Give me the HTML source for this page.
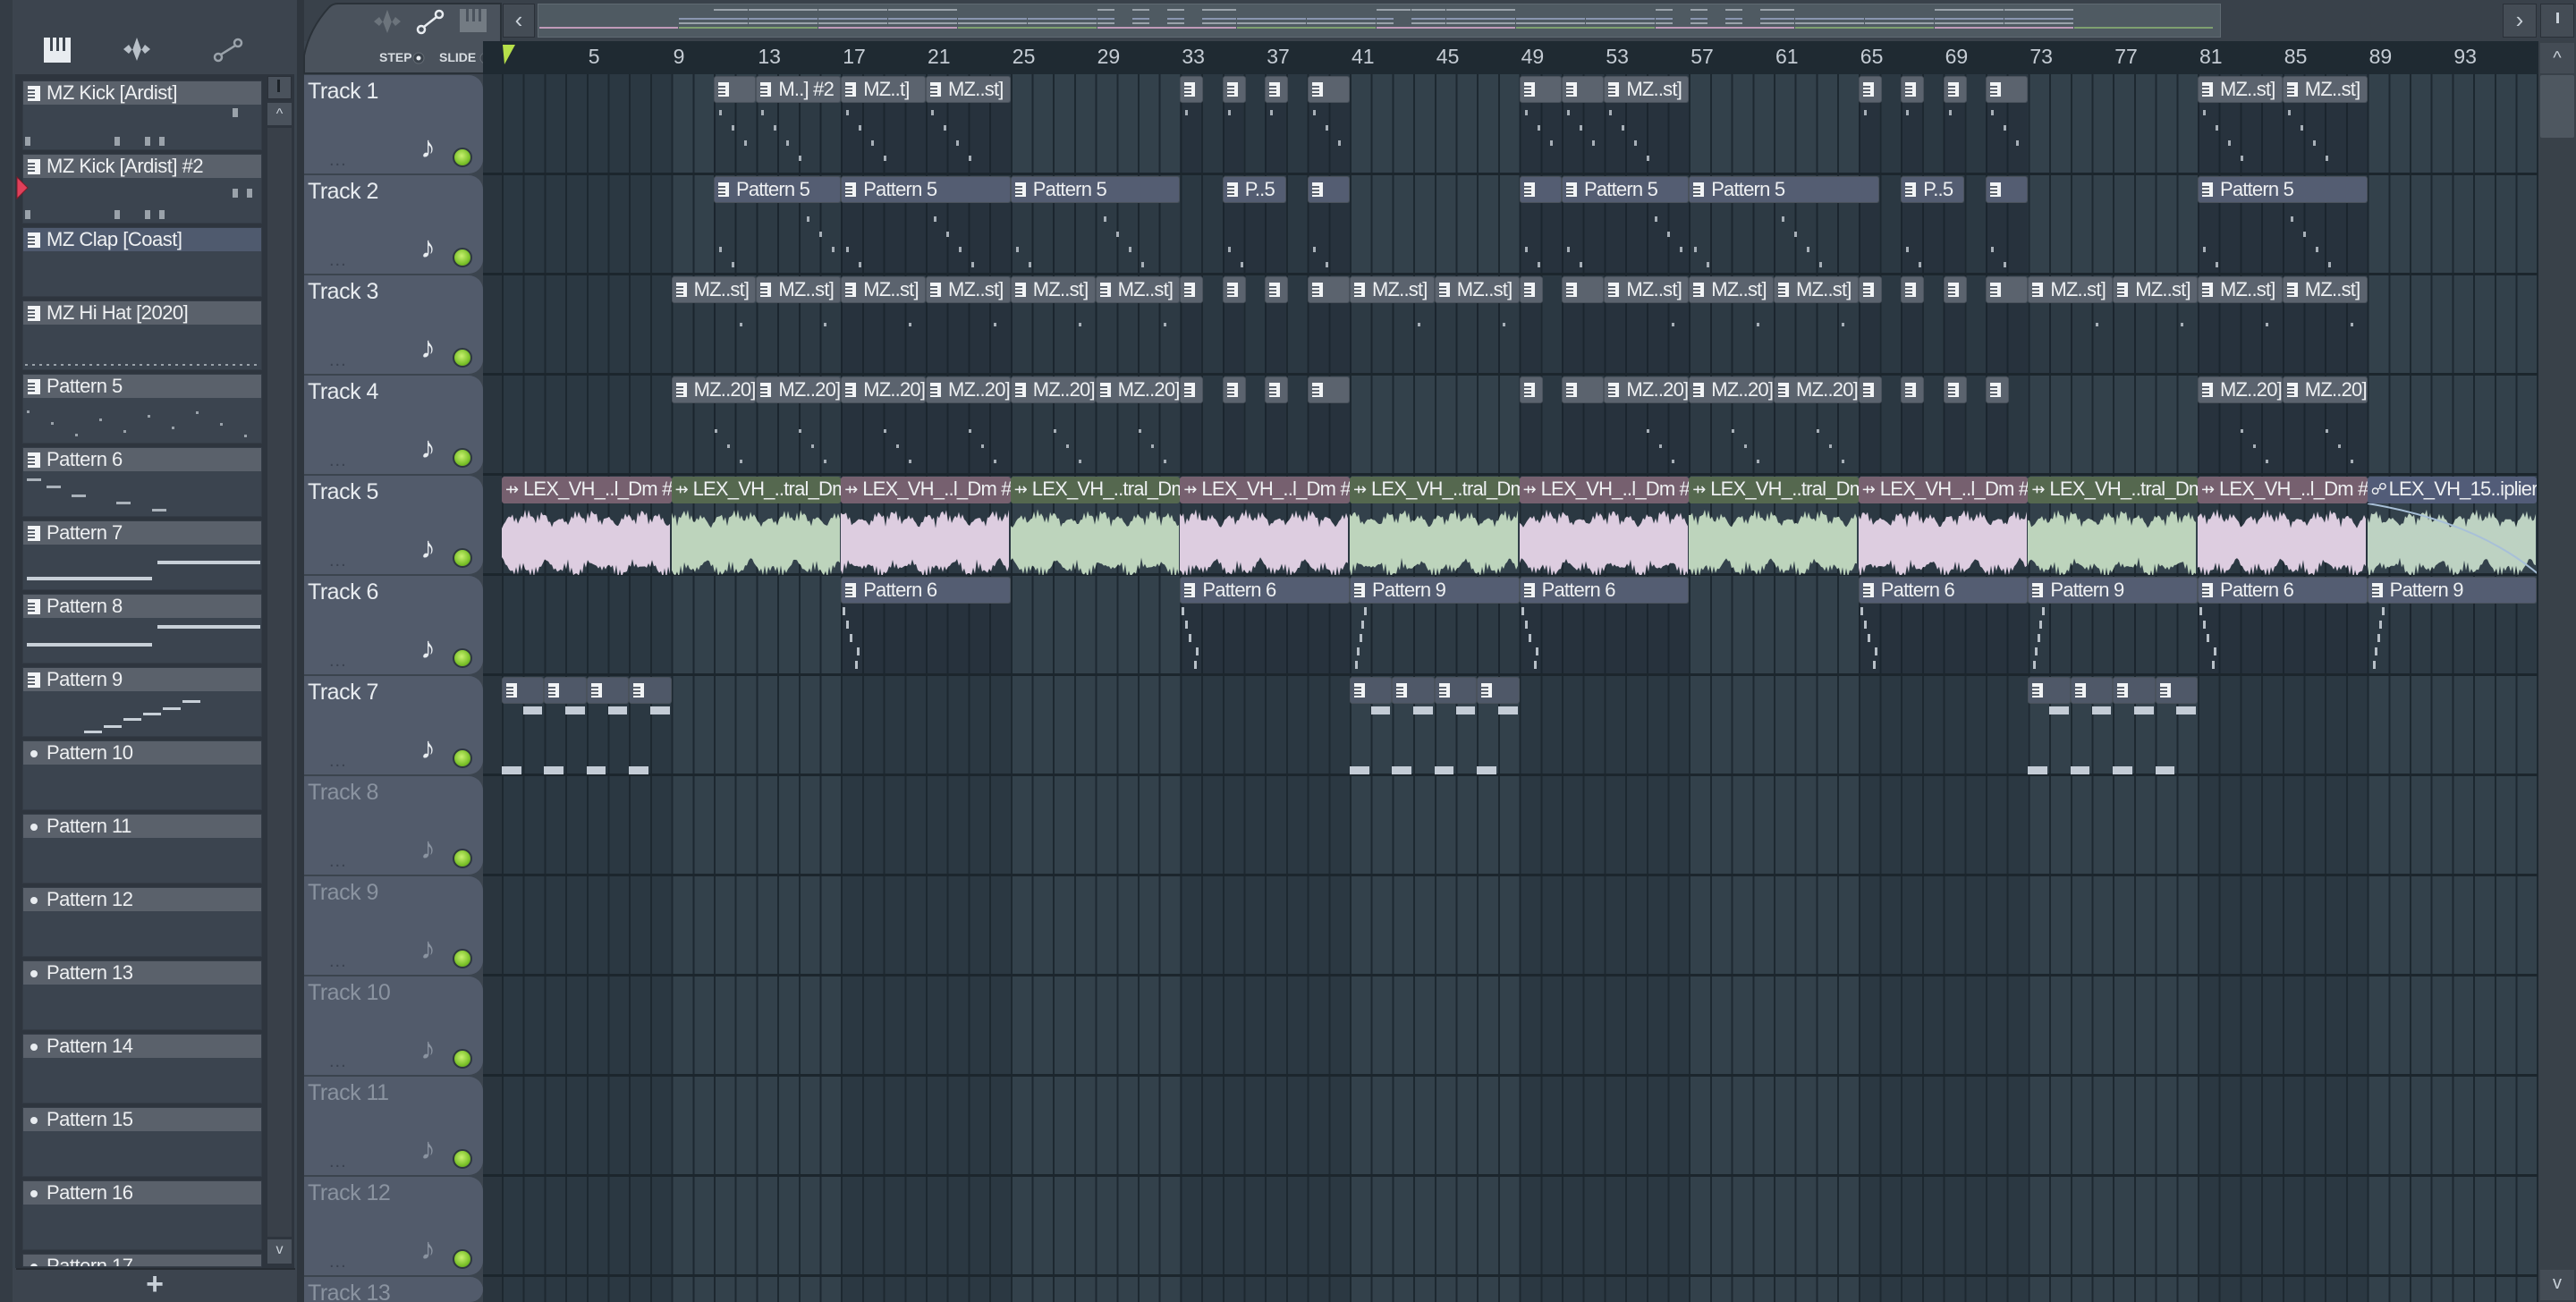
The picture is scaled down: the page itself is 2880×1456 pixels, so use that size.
<!DOCTYPE html>
<html><head><meta charset="utf-8"><style>
*{margin:0;padding:0;box-sizing:border-box}
html,body{width:2880px;height:1456px;overflow:hidden}
body{background:#3b444e;font-family:"Liberation Sans Narrow","Liberation Sans",sans-serif;color:#e6eaee}
#root{position:relative;width:2880px;height:1456px;overflow:hidden}
.a{position:absolute}
.pi{position:absolute;left:25px;width:268px;height:78px;background:#3b444f;border:1px solid #343c46}
.pt{position:absolute;left:0;top:0;width:100%;height:26px;background:#5a616b;font-size:22px;line-height:26px;padding-left:26px;white-space:nowrap;color:#eef0f2;letter-spacing:-0.5px}
.ic{position:absolute;left:5px;top:5px;width:14px;height:17px;background:#f2f4f6}
.ic:before{content:"";position:absolute;left:0;top:4px;width:8px;height:2px;background:#5a616b;box-shadow:0 4px 0 #5a616b,0 8px 0 #5a616b}
.dot{position:absolute;left:8px;top:10px;width:8px;height:8px;border-radius:50%;background:#e8ecf0}
.th{position:absolute;left:340px;width:200px;height:110px;background:#525b6b;border-radius:0 16px 16px 0;font-size:25px;padding:4px 0 0 4px;letter-spacing:-0.5px;overflow:hidden}
.th .n{position:absolute;left:130px;top:62px;font-size:34px}
.th .g{position:absolute;left:166px;top:81px;width:22px;height:22px;border-radius:50%;background:radial-gradient(circle at 45% 40%,#c8f070,#7cc22a 60%,#4d8a18);border:2px solid #2e3840}
.th .d{position:absolute;left:28px;top:84px;font-size:20px;color:#3a4250;letter-spacing:1px}
.cl{position:absolute;height:30px;background:#5b636e;border-radius:3px;border:1px solid #4a525c;font-size:22px;line-height:28px;padding-left:24px;white-space:nowrap;overflow:hidden;color:#eef0f2;letter-spacing:-0.8px}
.cl .ic{left:4px;top:6px;width:12px;height:16px}
.cl .ic:before{background:#5b636e}
.cb{position:absolute;background:rgba(20,30,40,.18)}
.au{position:absolute;height:30px;font-size:22px;line-height:28px;padding-left:24px;white-space:nowrap;overflow:hidden;color:#eef0f2;border-radius:3px;letter-spacing:-0.8px}
.rn{position:absolute;top:50px;font-size:23px;color:#c5ccd4}
</style></head><body><div id="root">
<div class="a" style="left:0;top:0;width:14px;height:1456px;background:#343c45"></div>
<div class="a" style="left:14px;top:0;width:318px;height:83px;background:#3c444e"></div>
<svg class="a" style="left:40px;top:30px" width="270" height="45">
<rect x="9" y="12" width="30" height="28" fill="#e8ecf0"/><rect x="16" y="12" width="3" height="15" fill="#3c444e"/><rect x="23" y="12" width="3" height="15" fill="#3c444e"/><rect x="30" y="12" width="3" height="15" fill="#3c444e"/>
<path d="M98 25 L104 20 L108 26 L113 12 L118 26 L122 20 L128 25 L122 30 L118 25 L113 38 L108 25 L104 30Z" fill="#b8c0c8"/>
<circle cx="204" cy="34" r="4" fill="none" stroke="#9aa2aa" stroke-width="2.5"/><circle cx="226" cy="18" r="4" fill="none" stroke="#9aa2aa" stroke-width="2.5"/><line x1="207" y1="31" x2="223" y2="21" stroke="#9aa2aa" stroke-width="2.5"/>
</svg>
<div class="a" style="left:17px;top:83px;width:312px;height:1335px;background:#2e353e"></div>
<div class="a" style="left:299px;top:85px;width:27px;height:26px;background:#4a525c;border:1px solid #2a3038"></div>
<div class="a" style="left:310px;top:89px;width:3px;height:14px;background:#1c2228"></div>
<div class="a" style="left:299px;top:115px;width:27px;height:25px;background:#4a525c;font-size:16px;text-align:center;line-height:26px;color:#c8d0d8">^</div>
<div class="a" style="left:299px;top:143px;width:27px;height:1240px;background:#394049"></div>
<div class="a" style="left:299px;top:1386px;width:27px;height:27px;background:#4a525c;font-size:16px;text-align:center;line-height:24px;color:#c8d0d8">v</div>
<div class="a" style="left:14px;top:1418px;width:318px;height:38px;background:#3c444e;text-align:center;font-size:34px;line-height:36px;color:#c8d0d8;font-weight:bold">+</div>
<div class="a" style="left:18px;top:1418px;width:312px;height:2px;background:#262c33"></div>
<div id="pl"></div>
<svg class="a" style="left:18px;top:197px" width="16" height="26"><path d="M1 1 L13 13 L1 25Z" fill="#e0405a" stroke="#7a1c2a"/></svg>
<div class="a" style="left:332px;top:0;width:2548px;height:46px;background:#39414a"></div>
<div class="a" style="left:332px;top:0;width:8px;height:1456px;background:#2f363e"></div>
<svg class="a" style="left:338px;top:2px" width="225" height="82"><path d="M2 80 L2 60 Q8 30 30 6 Q34 2 40 2 L222 2 L222 80Z" fill="#4a525c" stroke="#2a3138" stroke-width="2"/>
<path d="M80 22 L86 17 L90 23 L95 9 L100 23 L104 17 L110 22 L104 27 L100 22 L95 35 L90 22 L86 27Z" fill="#6c747c"/>
<circle cx="133" cy="31" r="4" fill="none" stroke="#e8ecf0" stroke-width="2.5"/><circle cx="153" cy="14" r="4" fill="none" stroke="#e8ecf0" stroke-width="2.5"/><line x1="136" y1="28" x2="150" y2="17" stroke="#e8ecf0" stroke-width="2.5"/>
<rect x="176" y="8" width="30" height="26" fill="#737b83"/><rect x="183" y="8" width="3" height="14" fill="#4a525c"/><rect x="190" y="8" width="3" height="14" fill="#4a525c"/><rect x="197" y="8" width="3" height="14" fill="#4a525c"/>
<text x="86" y="67" font-size="14" fill="#d8dde2" font-family="Liberation Sans" font-weight="bold">STEP</text><circle cx="130" cy="63" r="6" fill="#3a424b" stroke="#646c74"/><circle cx="130" cy="63" r="2.5" fill="#e8ecf0"/>
<text x="153" y="67" font-size="14" fill="#d8dde2" font-family="Liberation Sans" font-weight="bold">SLIDE</text><circle cx="205" cy="63" r="6" fill="#3a424b" stroke="#646c74"/><circle cx="205" cy="63" r="2.5" fill="#e8ecf0"/>
</svg>
<div class="a" style="left:562px;top:4px;width:36px;height:38px;background:#444c55;border:1px solid #2a3038;font-size:26px;text-align:center;line-height:34px;color:#c8d0d8">‹</div>
<div class="a" style="left:601px;top:4px;width:1882px;height:38px;background:#4f5a62;border:1px solid #606a72"></div>
<div id="ov"></div>
<div class="a" style="left:2798px;top:4px;width:38px;height:38px;background:#444c55;border:1px solid #2a3038;font-size:26px;text-align:center;line-height:34px;color:#c8d0d8">›</div>
<div class="a" style="left:2840px;top:4px;width:38px;height:38px;background:#444c55;border:1px solid #2a3038"></div>
<div class="a" style="left:2858px;top:14px;width:3px;height:12px;background:#c8d0d8"></div>
<div class="a" style="left:540px;top:46px;width:2298px;height:37px;background:#1f2a32"></div>
<svg class="a" style="left:560px;top:48px" width="20" height="30"><path d="M2 2 L16 2 L4 24Z" fill="#b6e04a"/></svg>
<div id="rl"></div>
<div class="a" style="left:540px;top:83px;width:2298px;height:1373px;background:#2b3842"></div>
<div id="lanes"></div>
<div class="a" style="left:2838px;top:46px;width:42px;height:1410px;background:#394149"></div>
<div class="a" style="left:2840px;top:48px;width:38px;height:34px;background:#444c55;font-size:20px;text-align:center;line-height:34px;color:#c8d0d8">^</div>
<div class="a" style="left:2840px;top:84px;width:38px;height:70px;background:#4e5760;border-radius:2px"></div>
<div class="a" style="left:2840px;top:1420px;width:38px;height:34px;background:#444c55;font-size:20px;text-align:center;line-height:30px;color:#c8d0d8">v</div>
<div id="th"></div>
<div id="cl"></div>
</div>
<script>
(function(){
var L=561,B=23.7,T0=83,H=112;
function X(b){return L+(b-1)*B}
function TY(n){return T0+n*H}
var h='';
var pn=["MZ Kick [Ardist]","MZ Kick [Ardist] #2","MZ Clap [Coast]","MZ Hi Hat [2020]"];
for(var i=5;i<=17;i++)pn.push("Pattern "+i);
for(var i=0;i<pn.length;i++){var y=90+i*82;var hh=Math.min(78,1417-y);if(hh<=0)break;
h+='<div class="pi" style="top:'+y+'px;height:'+hh+'px;overflow:hidden"><div class="pt" style="'+(i==2?'background:#4f5a6e':'')+'">'+(i<9?'<span class="ic"></span>':'<span class="dot"></span>')+pn[i]+'</div>';
if(i<2){h+='<div class="a" style="left:2px;top:62px;width:6px;height:10px;background:#9aa2aa;box-shadow:100px 0 #9aa2aa,134px 0 #9aa2aa,150px 0 #9aa2aa"></div><div class="a" style="left:234px;top:'+(i?38:30)+'px;width:6px;height:10px;background:#9aa2aa;'+(i?'box-shadow:16px 0 #9aa2aa':'')+'"></div>';}
if(i==3){h+='<div class="a" style="left:2px;top:70px;width:264px;height:2px;background:repeating-linear-gradient(90deg,#9aa2aa 0 3px,transparent 3px 8px)"></div>';}
if(i==4){for(var k=0;k<10;k++)h+='<div class="a" style="left:'+(4+k*27)+'px;top:'+(40+(k*13)%30)+'px;width:3px;height:3px;background:#9aa2aa"></div>';}
if(i==5){h+='<div class="a" style="left:4px;top:34px;width:16px;height:3px;background:#aab2ba;box-shadow:22px 8px #aab2ba,50px 18px #aab2ba,100px 26px #aab2ba,140px 34px #aab2ba"></div>';}
if(i==6){h+='<div class="a" style="left:150px;top:44px;width:115px;height:4px;background:#c8d0d8"></div><div class="a" style="left:4px;top:62px;width:140px;height:4px;background:#c8d0d8"></div>';}
if(i==7){h+='<div class="a" style="left:150px;top:34px;width:115px;height:4px;background:#c8d0d8"></div><div class="a" style="left:4px;top:54px;width:140px;height:4px;background:#c8d0d8"></div>';}
if(i==8){h+='<div class="a" style="left:90px;top:64px;width:20px;height:3px;background:#c8d0d8;box-shadow:22px -8px #c8d0d8,44px -14px #c8d0d8,66px -20px #c8d0d8,88px -28px #c8d0d8,-22px 6px #c8d0d8"></div>';}
h+='</div>';}
document.getElementById('pl').innerHTML=h;
h='';for(var b=5;b<=93;b+=4)h+='<div class="rn" style="left:'+(X(b)+2)+'px">'+b+'</div>';
document.getElementById('rl').innerHTML=h;
h='';for(var b=1;b<=97;b+=8){var x=X(b);if(((b-1)/8)%2==1)h+='<div class="a" style="left:'+x+'px;top:83px;width:'+Math.min(8*B,2838-x)+'px;height:1373px;background:#33414b"></div>';}
h+='<div class="a" style="left:540px;top:83px;width:21px;height:1373px;background:#2a353e"></div>';
h+='<div class="a" style="left:'+L+'px;top:83px;width:2277px;height:1373px;background:repeating-linear-gradient(90deg,#1d2830 0 2px,transparent 2px '+B+'px)"></div>';
for(var n=0;n<12;n++)h+='<div class="a" style="left:540px;top:'+(TY(n)+H-2)+'px;width:2298px;height:3px;background:#1c262d"></div>';
document.getElementById('lanes').innerHTML=h;
h='';for(var n=0;n<13;n++){var c=n<7?'#e8ecf0':'#8a93a0';var ty=TY(n)+1;var th=Math.min(110,1456-ty);h+='<div class="th" style="top:'+ty+'px;height:'+th+'px;color:'+c+'">Track '+(n+1)+'<span class="n">♪</span><span class="g"></span><span class="d">...</span></div>';}
document.getElementById('th').innerHTML=h;
h='';
function clip(t,a,b2,lab,bg){var x=X(a),w=(b2-a)*B;var y=TY(t)+2;
h+='<div class="cb" style="left:'+x+'px;top:'+(y+30)+'px;width:'+w+'px;height:78px"></div>';
h+='<div class="cl" style="left:'+x+'px;top:'+y+'px;width:'+w+'px;'+(bg?'background:'+bg:'')+'"><span class="ic"></span>'+(lab||'')+'</div>';
var m=Math.floor(w/14);for(var k=0;k<m;k++){var s=(k*37+t*11)%9;if(s<4)h+='<div class="a" style="left:'+(x+6+k*14)+'px;top:'+(y+38+(s*17+t*7)%68)+'px;width:3px;height:'+(t<2?6:4)+'px;background:#a8b0b8"></div>';}}
var t1=[[11,13,""],[13,17,"M..] #2"],[17,21,"MZ..t]"],[21,25,"MZ..st]"],[33,34],[35,36],[37,38],[39,41],[49,51],[51,53],[53,57,"MZ..st]"],[65,66],[67,68],[69,70],[71,73],[81,85,"MZ..st]"],[85,89,"MZ..st]"]];
t1.forEach(function(c){clip(0,c[0],c[1],c[2])});
var P5='#545d72';
[[11,17,"Pattern 5"],[17,25,"Pattern 5"],[25,33,"Pattern 5"],[35,38,"P..5"],[39,41],[49,51],[51,57,"Pattern 5"],[57,66,"Pattern 5"],[67,70,"P..5"],[71,73],[81,89,"Pattern 5"]].forEach(function(c){clip(1,c[0],c[1],c[2],P5)});
var t3=[[9,13],[13,17],[17,21],[21,25],[25,29],[29,33],[33,34],[35,36],[37,38],[39,41],[41,45],[45,49],[49,50],[51,53],[53,57],[57,61],[61,65],[65,66],[67,68],[69,70],[71,73],[73,77],[77,81],[81,85],[85,89]];
t3.forEach(function(c){clip(2,c[0],c[1],(c[1]-c[0])>=4?"MZ..st]":"")});
var t4=[[9,13],[13,17],[17,21],[21,25],[25,29],[29,33],[33,34],[35,36],[37,38],[39,41],[49,50],[51,53],[53,57],[57,61],[61,65],[65,66],[67,68],[69,70],[71,72],[81,85],[85,89]];
t4.forEach(function(c){clip(3,c[0],c[1],(c[1]-c[0])>=4?"MZ..20]":"")});
for(var k=0;k<12;k++){var a=1+k*8,x=X(a),w=8*B;if(x+w>2838)w=2838-x;var pink=k%2==0,last=k==11;
var hb=last?'#525c78':(pink?'#76606f':'#55684f'),wf=last?'#bdd2c2':(pink?'#ddcde0':'#bdd4bc');var y=TY(4)+2;
var lab=last?'LEX_VH_15..iplier':(pink?'LEX_VH_..l_Dm #2':'LEX_VH_..tral_Dm');
h+='<div class="au" style="left:'+x+'px;top:'+y+'px;width:'+w+'px;background:'+hb+'"><span style="position:absolute;left:4px;top:0;font-size:18px">'+(last?'☍':'⇸')+'</span>'+lab+'</div>';
var p='M0 44';for(var j=0;j<=w;j+=2){var v=16+12*Math.abs(Math.sin(j*0.9+k))*Math.abs(Math.sin(j*0.05+k))+10*Math.abs(Math.sin(j*0.17+k*2));p+=' L'+j+' '+(44-v).toFixed(1);}
for(var j=Math.floor(w/2)*2;j>=0;j-=2){var v=16+14*Math.abs(Math.cos(j*0.7+k))*Math.abs(Math.sin(j*0.06+k))+10*Math.abs(Math.sin(j*0.13+k));p+=' L'+j+' '+(44+v).toFixed(1);}
h+='<svg class="a" style="left:'+x+'px;top:'+(y+30)+'px" width="'+w+'" height="80"><path d="'+p+'Z" fill="'+wf+'"/>'+(last?'<path d="M0 0 Q120 20 '+w+' 78" stroke="#a8c0d8" stroke-width="2" fill="none"/>':'')+'</svg>';}
[[17,25,6],[33,41,6],[41,49,9],[49,57,6],[65,73,6],[73,81,9],[81,89,6],[89,97,9]].forEach(function(c){var x=X(c[0]),w=Math.min((c[1]-c[0])*B,2838-x),y=TY(5)+2;
h+='<div class="cb" style="left:'+x+'px;top:'+(y+30)+'px;width:'+w+'px;height:78px"></div><div class="cl" style="left:'+x+'px;top:'+y+'px;width:'+w+'px;background:'+P5+'"><span class="ic"></span>Pattern '+c[2]+'</div>';
for(var k=0;k<5;k++){var dx=c[2]==6?[0,4,8,16,14][k]:[14,11,9,6,4][k];h+='<div class="a" style="left:'+(x+2+dx)+'px;top:'+(y+34+k*15)+'px;width:3px;height:9px;background:#b8c0c8"></div>';}});
[1,3,5,7,41,43,45,47,73,75,77,79].forEach(function(a){var x=X(a),w=2*B,y=TY(6)+2;
h+='<div class="cl" style="left:'+x+'px;top:'+y+'px;width:'+w+'px;background:#4f5868"><span class="ic"></span></div>';
h+='<div class="a" style="left:'+(x+B)+'px;top:'+(y+33)+'px;width:'+(B-2)+'px;height:9px;background:#c4ccd6"></div><div class="a" style="left:'+x+'px;top:'+(y+100)+'px;width:'+(B-2)+'px;height:9px;background:#c4ccd6"></div>';});
document.getElementById('cl').innerHTML=h;
h='';
function ob(r,a,b2,c){h+='<div class="a" style="left:'+(603+(a-1)*19.5)+'px;top:'+(10+r*5)+'px;width:'+((b2-a)*19.5-1)+'px;height:2px;background:'+c+'"></div>';}
t1.forEach(function(c){ob(0,c[0],c[1],'#9aa2aa')});t3.forEach(function(c){ob(2,c[0],c[1],'#8a96b0');ob(3,c[0],c[1],'#9aa2aa')});
for(var k=0;k<12;k++)ob(4,1+k*8,Math.min(97,9+k*8),k%2?'#7fa070':'#c09ab8');
document.getElementById('ov').innerHTML=h;
})();
</script>
</body></html>
